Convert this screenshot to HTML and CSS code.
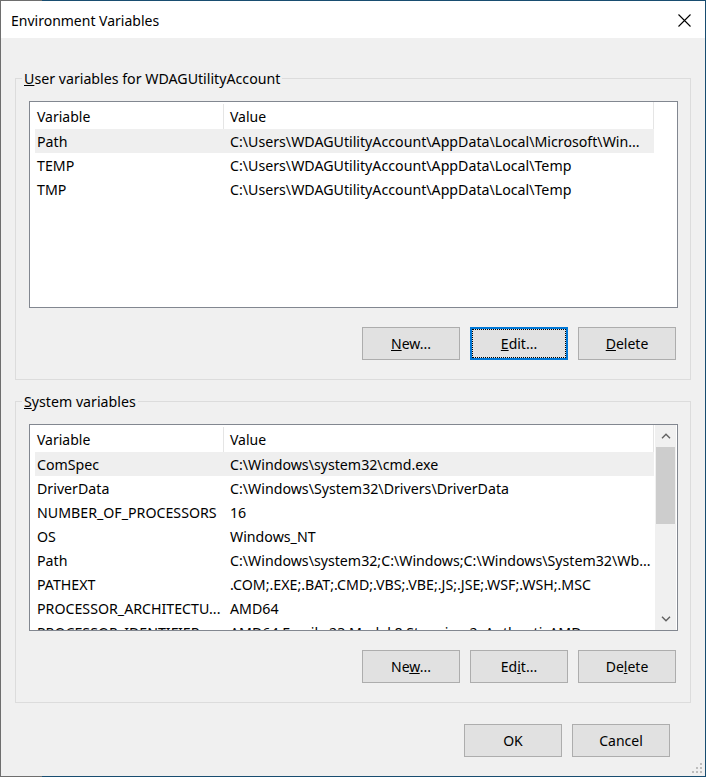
FILE: index.html
```html
<!DOCTYPE html>
<html lang="en">
<head>
  <meta charset="UTF-8" />
  <title>Environment Variables</title>
  <link rel="stylesheet" href="styles.css">
</head>
<body>
  <div class="window">
    <!-- Title bar -->
    <div class="titlebar">
      <span class="title">Environment Variables</span>
      <svg class="close" width="13" height="13" viewBox="0 0 13 13">
        <path d="M0.5 0.5 L12.5 12.5 M12.5 0.5 L0.5 12.5" stroke="#000" stroke-width="1.1" fill="none"/>
      </svg>
    </div>

    <div class="content">
      <!-- User variables -->
      <div class="group">
        <div class="group-label"><u>U</u>ser variables for WDAGUtilityAccount</div>
        <div class="list">
          <div class="list-main">
            <div class="list-header">
              <div class="col-var">Variable</div>
              <div class="col-val">Value</div>
            </div>
            <div class="row selected">
              <div class="col-var">Path</div>
              <div class="col-val">C:\Users\WDAGUtilityAccount\AppData\Local\Microsoft\Win...</div>
            </div>
            <div class="row">
              <div class="col-var">TEMP</div>
              <div class="col-val">C:\Users\WDAGUtilityAccount\AppData\Local\Temp</div>
            </div>
            <div class="row">
              <div class="col-var">TMP</div>
              <div class="col-val">C:\Users\WDAGUtilityAccount\AppData\Local\Temp</div>
            </div>
          </div>
        </div>
        <div class="actions">
          <button class="btn"><u>N</u>ew...</button>
          <button class="btn default"><u>E</u>dit...</button>
          <button class="btn"><u>D</u>elete</button>
        </div>
      </div>

      <!-- System variables -->
      <div class="group system">
        <div class="group-label"><u>S</u>ystem variables</div>
        <div class="list">
          <div class="list-main">
            <div class="list-header">
              <div class="col-var">Variable</div>
              <div class="col-val">Value</div>
            </div>
            <div class="row selected">
              <div class="col-var">ComSpec</div>
              <div class="col-val">C:\Windows\system32\cmd.exe</div>
            </div>
            <div class="row">
              <div class="col-var">DriverData</div>
              <div class="col-val">C:\Windows\System32\Drivers\DriverData</div>
            </div>
            <div class="row">
              <div class="col-var">NUMBER_OF_PROCESSORS</div>
              <div class="col-val">16</div>
            </div>
            <div class="row">
              <div class="col-var">OS</div>
              <div class="col-val">Windows_NT</div>
            </div>
            <div class="row">
              <div class="col-var">Path</div>
              <div class="col-val">C:\Windows\system32;C:\Windows;C:\Windows\System32\Wb...</div>
            </div>
            <div class="row">
              <div class="col-var">PATHEXT</div>
              <div class="col-val">.COM;.EXE;.BAT;.CMD;.VBS;.VBE;.JS;.JSE;.WSF;.WSH;.MSC</div>
            </div>
            <div class="row">
              <div class="col-var">PROCESSOR_ARCHITECTU...</div>
              <div class="col-val">AMD64</div>
            </div>
            <div class="row">
              <div class="col-var">PROCESSOR_IDENTIFIER</div>
              <div class="col-val">AMD64 Family 23 Model 8 Stepping 2, AuthenticAMD</div>
            </div>
          </div>
          <div class="scrollbar">
            <div class="arrow">
              <svg width="10" height="6" viewBox="0 0 10 6"><path d="M1 5.2 L5 1.2 L9 5.2" stroke="#606060" stroke-width="1.4" fill="none"/></svg>
            </div>
            <div class="track"><div class="thumb"></div></div>
            <div class="arrow">
              <svg width="10" height="6" viewBox="0 0 10 6"><path d="M1 0.8 L5 4.8 L9 0.8" stroke="#606060" stroke-width="1.4" fill="none"/></svg>
            </div>
          </div>
        </div>
        <div class="actions">
          <button class="btn">Ne<u>w</u>...</button>
          <button class="btn">Ed<u>i</u>t...</button>
          <button class="btn">De<u>l</u>ete</button>
        </div>
      </div>

      <!-- Dialog buttons -->
      <div class="footer">
        <button class="btn">OK</button>
        <button class="btn">Cancel</button>
      </div>
    </div>

    <!-- Resize grip -->
    <svg class="grip" width="12" height="12" viewBox="0 0 12 12">
      <rect x="8" y="0" width="2" height="2" fill="#bdbdbd"/>
      <rect x="4" y="4" width="2" height="2" fill="#bdbdbd"/>
      <rect x="8" y="4" width="2" height="2" fill="#bdbdbd"/>
      <rect x="0" y="8" width="2" height="2" fill="#bdbdbd"/>
      <rect x="4" y="8" width="2" height="2" fill="#bdbdbd"/>
      <rect x="8" y="8" width="2" height="2" fill="#bdbdbd"/>
    </svg>
  </div>
</body>
</html>
```

FILE: styles.css
```css
* {
    box-sizing: border-box;
}

body {
    margin: 0;
    font-family: "Noto Sans", "Open Sans", sans-serif;
    font-size: 14px;
    color: #000;
}

.window {
    position: relative;
    width: 706px;
    height: 777px;
    background: #f0f0f0;
    border: 1px solid #184d70;
    border-left-color: #6e6e6e;
    display: flex;
    flex-direction: column;
}

/* grey corner bits of the frame */
.window::before,
.window::after {
    content: "";
    position: absolute;
    left: -1px;
    width: 42px;
    height: 1px;
    background: #6e6e6e;
}

.window::before {
    top: -1px;
}

.window::after {
    bottom: -1px;
}

/* Title bar */
.titlebar {
    height: 37px;
    background: #fff;
    display: flex;
    align-items: center;
    justify-content: space-between;
    padding: 1px 14px 0 10px;
}

.close {
    display: block;
}

.content {
    flex: 1;
    padding: 40px 14px 0;
    display: flex;
    flex-direction: column;
}

/* Group boxes */
.group {
    border: 1px solid #dcdcdc;
    padding: 0 12px 19px 13px;
}

.group + .group {
    margin-top: 21px;
}

.group-label {
    display: table;
    margin: -12px 0 0 -7px;
    padding: 2px 2px 0;
    line-height: 20px;
    font-size: 14.2px;
    background: #f0f0f0;
}

/* List views */
.list {
    margin-top: 12px;
    height: 207px;
    border: 1px solid #828790;
    background: #fff;
    display: flex;
}

.list-main {
    flex: 1;
    overflow: hidden;
    padding-left: 5px;
}

.list-header,
.row {
    width: 619px;
    display: flex;
    white-space: nowrap;
}

.list-header {
    height: 27px;
    padding-top: 2px;
    line-height: 25px;
    border-right: 1px solid #e5e5e5;
}

.row {
    height: 24px;
    padding-top: 1px;
    line-height: 23px;
    font-size: 14.2px;
}

.row.selected {
    background: #efefef;
}

.col-var {
    width: 188px;
    padding-left: 2px;
    overflow: hidden;
    text-overflow: ellipsis;
}

.col-val {
    flex: 1;
    padding-left: 7px;
    overflow: hidden;
    text-overflow: ellipsis;
}

.list-header .col-val {
    border-left: 1px solid #e5e5e5;
    padding-left: 6px;
}

/* Scrollbar */
.scrollbar {
    width: 21px;
    margin-right: 1px;
    background: #f0f0f0;
    display: flex;
    flex-direction: column;
}

.arrow {
    height: 22px;
    display: flex;
    align-items: center;
    justify-content: center;
}

.arrow svg {
    display: block;
}

.track {
    flex: 1;
    padding: 0 1px;
}

.thumb {
    height: 77px;
    background: #cdcdcd;
}

/* Buttons */
.actions,
.footer {
    display: flex;
    justify-content: flex-end;
    gap: 10px;
}

.actions {
    margin-top: 19px;
    padding-right: 2px;
}

.footer {
    margin-top: 21px;
    padding-right: 21px;
}

.btn {
    width: 98px;
    height: 33px;
    border: 1px solid #adadad;
    background: #e1e1e1;
    font-family: inherit;
    font-size: 14px;
    color: #000;
    padding: 0;
}

.btn.default {
    border: 2px solid #0078d7;
    outline: 1px dotted #000;
    outline-offset: -3px;
}

.grip {
    position: absolute;
    right: 1px;
    bottom: 1px;
}
```
